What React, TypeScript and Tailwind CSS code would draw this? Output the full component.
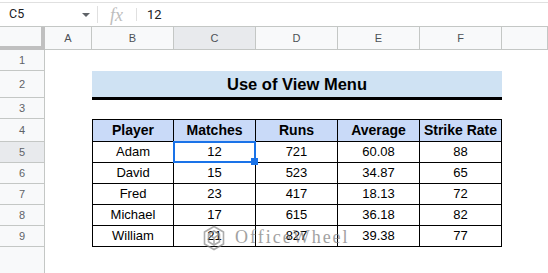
import React from "react";

const colWidths = ["w-[47px]", "w-[82px]", "w-[82px]", "w-[82px]", "w-[82px]", "w-[82px]", "w-[46px]"];
const colLabels = ["A", "B", "C", "D", "E", "F", ""];

const players = [
  ["Adam", "12", "721", "60.08", "88"],
  ["David", "15", "523", "34.87", "65"],
  ["Fred", "23", "417", "18.13", "72"],
  ["Michael", "17", "615", "36.18", "82"],
  ["William", "21", "827", "39.38", "77"],
];

const headers = ["Player", "Matches", "Runs", "Average", "Strike Rate"];

const RowHeader = ({ n, active }: { n: number; active?: boolean }) => (
  <div
    className={`w-[45px] shrink-0 h-full flex items-center justify-center border-r border-b border-[#c4c7c5] text-[11px] text-[#5f6368] ${
      active ? "bg-[#e8eaed]" : "bg-[#f8f9fa]"
    }`}
  >
    {n}
  </div>
);

// site watermark that sits over the table
const Watermark = () => (
  <div className="absolute left-[203px] top-[224px] flex items-center gap-[10px] opacity-70 pointer-events-none">
    <svg width="22" height="26" viewBox="0 0 22 26" fill="none" stroke="#8a8a8a" strokeWidth="1.6">
      <path d="M11 1.5 L20.5 7 V19 L11 24.5 L1.5 19 V7 Z" />
      <path d="M11 6 L16.5 9.2 V16.8 L11 20 L5.5 16.8 V9.2 Z" />
      <path d="M11 13 L16.5 9.2 M11 13 V20 M11 13 L5.5 9.2" />
    </svg>
    <span className="font-['Liberation_Serif',serif] text-[18px] tracking-[2px] text-[#7a7a7a]">
      OfficeWheel
    </span>
  </div>
);

export default function App() {
  return (
    <div className="relative w-[548px] h-[273px] overflow-hidden bg-white font-['Liberation_Sans',Arial,sans-serif]">
      {/* formula bar */}
      <div className="pt-[2px]">
        <div className="h-[24px] border-t border-[#e0e0e0] flex items-center font-['Roboto',sans-serif] text-[#202124]">
          <span className="w-[82px] pl-[9px] text-[12.5px]">C5</span>
          <span className="w-0 h-0 border-l-[4px] border-r-[4px] border-t-[4px] border-l-transparent border-r-transparent border-t-[#5f6368]" />
          <span className="ml-[7px] w-px h-[17px] bg-[#e0e0e0]" />
          <span className="ml-[12px] font-['Liberation_Serif',serif] italic text-[18px] text-[#bdbdbd] leading-none">fx</span>
          <span className="ml-[13px] w-px h-[13px] bg-[#e0e0e0]" />
          <span className="ml-[10px] text-[13px]">12</span>
        </div>
      </div>

      {/* column headers */}
      <div className="flex h-[24px] border-t border-[#c4c7c5]">
        <div className="w-[45px] shrink-0 h-full bg-[#f8f9fa] border-r-4 border-b-4 border-[#c0c0c0]" />
        {colLabels.map((c, i) => (
          <div
            key={i}
            className={`${colWidths[i]} shrink-0 h-full flex items-center justify-center border-r border-b border-[#c4c7c5] text-[11px] text-[#4d5156] ${
              c === "C" ? "bg-[#e8eaed]" : "bg-[#f8f9fa]"
            }`}
          >
            {c}
          </div>
        ))}
      </div>

      <div className="flex h-[21px]">
        <RowHeader n={1} />
      </div>

      {/* title */}
      <div className="flex h-[27px]">
        <RowHeader n={2} />
        <div className="w-[47px] shrink-0" />
        <div className="w-[410px] shrink-0 h-[29px] bg-[#cfe2f3] border-b-[3px] border-black flex items-center justify-center text-[16.5px] font-bold text-black">
          Use of View Menu
        </div>
      </div>

      <div className="flex h-[21px]">
        <RowHeader n={3} />
      </div>

      {/* table header */}
      <div className="flex h-[23px]">
        <RowHeader n={4} />
        <div className="w-[47px] shrink-0" />
        {headers.map((h, i) => (
          <div
            key={h}
            className={`w-[82px] shrink-0 h-full flex items-center justify-center bg-[#c9daf8] border-t border-r border-b border-black text-[14px] font-bold text-black ${
              i === 0 ? "border-l" : ""
            }`}
          >
            {h}
          </div>
        ))}
      </div>

      {players.map((p, r) => (
        <div key={p[0]} className="flex h-[21px]">
          <RowHeader n={r + 5} active={r === 0} />
          <div className="w-[47px] shrink-0" />
          {p.map((v, i) => (
            <div
              key={i}
              className={`relative w-[82px] shrink-0 h-full flex items-center justify-center border-r border-b border-black text-[13px] text-black ${
                i === 0 ? "border-l" : ""
              }`}
            >
              {v}
              {r === 0 && i === 1 && (
                <div className="absolute -left-px -top-px -right-px -bottom-px z-10 border-2 border-[#1a73e8]">
                  <div className="absolute -right-[4px] -bottom-[4px] w-[7px] h-[7px] bg-[#1a73e8]" />
                </div>
              )}
            </div>
          ))}
        </div>
      ))}

      <div className="flex h-[30px]">
        <div className="w-[45px] shrink-0 h-full bg-[#f8f9fa] border-r border-[#c4c7c5]" />
      </div>

      <Watermark />
    </div>
  );
}
